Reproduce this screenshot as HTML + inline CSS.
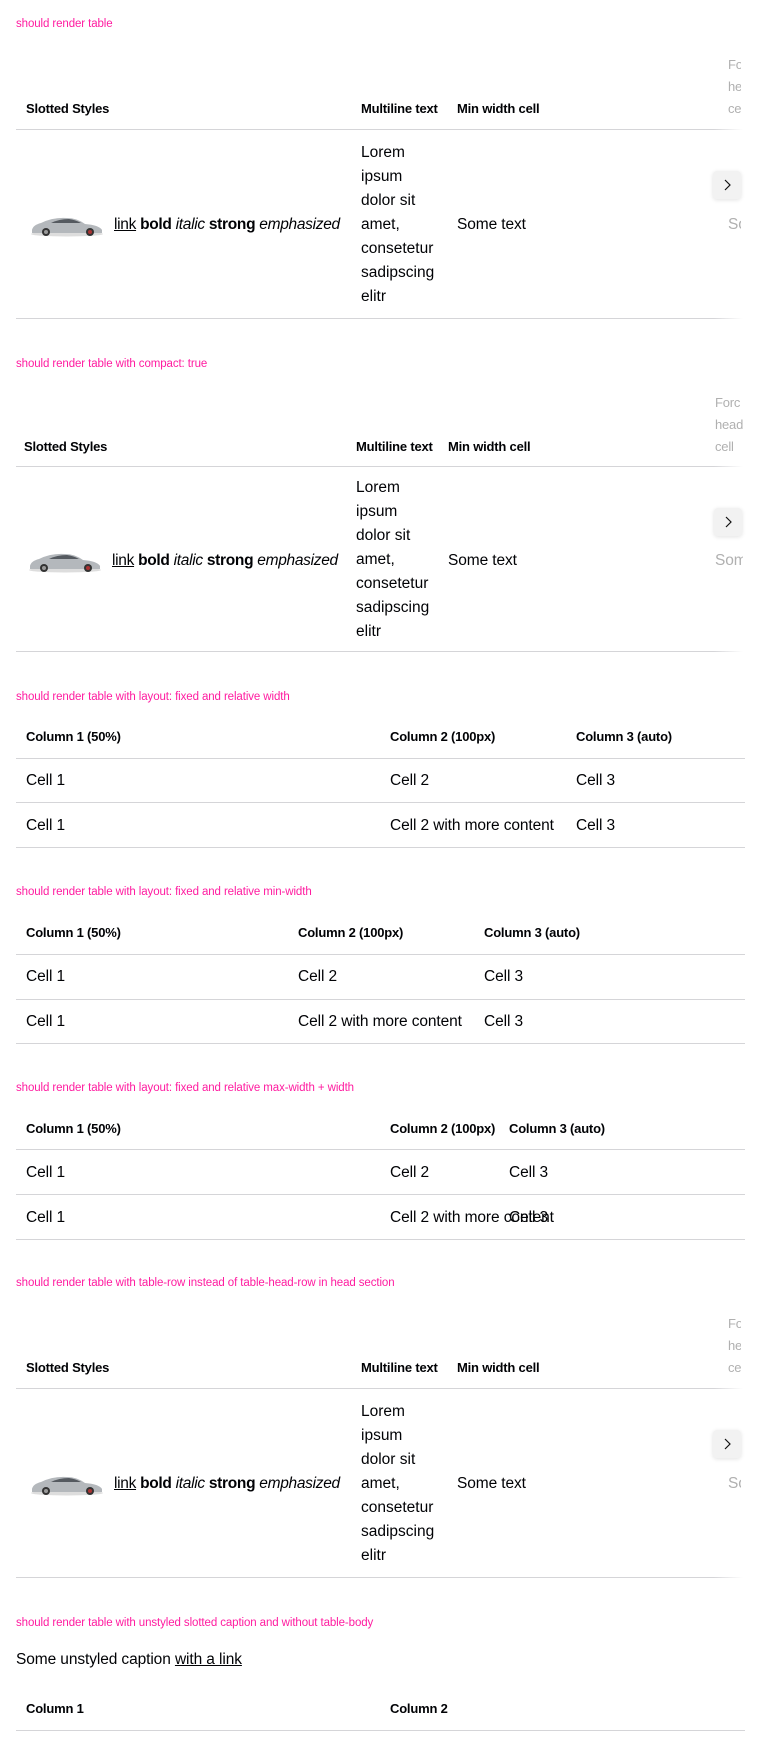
<!DOCTYPE html>
<html><head><meta charset="utf-8"><style>
html,body{margin:0;padding:0;background:#fff}
body{width:760px;height:1751px;position:relative;overflow:hidden;font-family:"Liberation Sans",sans-serif;color:#010205}
.l{position:absolute;left:16px;font-size:11.5px;color:#ff1ca0;line-height:14px;white-space:nowrap;letter-spacing:-0.1px}
.h{position:absolute;font-size:13px;font-weight:bold;line-height:20px;white-space:nowrap;letter-spacing:-0.2px}
.c{position:absolute;font-size:15.5px;line-height:24px;white-space:nowrap;letter-spacing:-0.1px}
.g{color:#b0b0b0;overflow:hidden;width:13px;font-weight:normal}
.hl{position:absolute;left:16px;width:729px;height:1px;background:#d5d5d8}
.fl{position:absolute;left:16px;width:727px;height:1px;background:linear-gradient(to right,#d5d5d8 0,#d5d5d8 96%,rgba(213,213,216,0) 100%)}
.btn{position:absolute;width:28px;height:28px;background:#f2f2f2;border-radius:4px;box-shadow:0 1px 4px rgba(0,0,0,.12)}
.btn svg{position:absolute;left:8px;top:7px}
.mt{position:absolute;font-size:15.5px;line-height:24px;white-space:nowrap}
u{text-decoration:underline}
</style></head><body>

<!-- Table 1 -->
<div class="l" style="top:17px">should render table</div>
<div class="h" style="left:26px;top:99px">Slotted Styles</div>
<div class="h" style="left:361px;top:99px">Multiline text</div>
<div class="h" style="left:457px;top:99px">Min width cell</div>
<div class="h g" style="left:728px;top:54px;font-size:13px;line-height:22px">Fo<br>he<br>ce</div>
<div class="fl" style="top:129px"></div>
<svg style="position:absolute;left:29px;top:213px" width="76" height="24" viewBox="0 0 76 24"><ellipse cx="38" cy="21" rx="36" ry="2.5" fill="#ddd"/><path d="M3 17 Q4 12 12 10 Q24 4 38 5 Q48 5 56 11 Q70 12 73 17 L73 20 L3 20 Z" fill="#b4b8bc"/><path d="M22 10 Q30 6 40 6 Q47 7 52 10 Z" fill="#555a60"/><circle cx="17" cy="19" r="4" fill="#333"/><circle cx="17" cy="19" r="2" fill="#999"/><circle cx="61" cy="19" r="4" fill="#333"/><circle cx="61" cy="19" r="2" fill="#a33"/></svg>
<div class="c" style="left:114px;top:213px;letter-spacing:-0.3px"><u>link</u> <b>bold</b> <i>italic</i> <strong>strong</strong> <em>emphasized</em></div>
<div class="mt" style="left:361px;top:141px">Lorem<br>ipsum<br>dolor sit<br>amet,<br>consetetur<br>sadipscing<br>elitr</div>
<div class="c" style="left:457px;top:213px">Some text</div>
<div class="c g" style="left:728px;top:213px">So</div>
<div class="btn" style="left:713px;top:171px"><svg width="12" height="14" viewBox="0 0 12 14"><path d="M4 2 L9 7 L4 12" fill="none" stroke="#111" stroke-width="1.2"/></svg></div>
<div class="fl" style="top:318px"></div>

<!-- Table 2 compact -->
<div class="l" style="top:357px">should render table with compact: true</div>
<div class="h" style="left:24px;top:437px">Slotted Styles</div>
<div class="h" style="left:356px;top:437px">Multiline text</div>
<div class="h" style="left:448px;top:437px">Min width cell</div>
<div class="h g" style="left:715px;top:392px;font-size:13px;line-height:22px;width:28px">Forc<br>head<br>cell</div>
<div class="fl" style="top:466px"></div>
<svg style="position:absolute;left:27px;top:549px" width="76" height="24" viewBox="0 0 76 24"><ellipse cx="38" cy="21" rx="36" ry="2.5" fill="#ddd"/><path d="M3 17 Q4 12 12 10 Q24 4 38 5 Q48 5 56 11 Q70 12 73 17 L73 20 L3 20 Z" fill="#b4b8bc"/><path d="M22 10 Q30 6 40 6 Q47 7 52 10 Z" fill="#555a60"/><circle cx="17" cy="19" r="4" fill="#333"/><circle cx="17" cy="19" r="2" fill="#999"/><circle cx="61" cy="19" r="4" fill="#333"/><circle cx="61" cy="19" r="2" fill="#a33"/></svg>
<div class="c" style="left:112px;top:549px;letter-spacing:-0.3px"><u>link</u> <b>bold</b> <i>italic</i> <strong>strong</strong> <em>emphasized</em></div>
<div class="mt" style="left:356px;top:476px">Lorem<br>ipsum<br>dolor sit<br>amet,<br>consetetur<br>sadipscing<br>elitr</div>
<div class="c" style="left:448px;top:549px">Some text</div>
<div class="c g" style="left:715px;top:549px;width:28px">Som</div>
<div class="btn" style="left:714px;top:508px"><svg width="12" height="14" viewBox="0 0 12 14"><path d="M4 2 L9 7 L4 12" fill="none" stroke="#111" stroke-width="1.2"/></svg></div>
<div class="fl" style="top:651px"></div>

<!-- Table 3 -->
<div class="l" style="top:690px">should render table with layout: fixed and relative width</div>
<div class="h" style="left:26px;top:727px">Column 1 (50%)</div>
<div class="h" style="left:390px;top:727px">Column 2 (100px)</div>
<div class="h" style="left:576px;top:727px">Column 3 (auto)</div>
<div class="hl" style="top:758px"></div>
<div class="c" style="left:26px;top:769px">Cell 1</div>
<div class="c" style="left:390px;top:769px">Cell 2</div>
<div class="c" style="left:576px;top:769px">Cell 3</div>
<div class="hl" style="top:802px"></div>
<div class="c" style="left:26px;top:814px">Cell 1</div>
<div class="c" style="left:390px;top:814px">Cell 2 with more content</div>
<div class="c" style="left:576px;top:814px">Cell 3</div>
<div class="hl" style="top:847px"></div>

<!-- Table 4 -->
<div class="l" style="top:885px">should render table with layout: fixed and relative min-width</div>
<div class="h" style="left:26px;top:923px">Column 1 (50%)</div>
<div class="h" style="left:298px;top:923px">Column 2 (100px)</div>
<div class="h" style="left:484px;top:923px">Column 3 (auto)</div>
<div class="hl" style="top:954px"></div>
<div class="c" style="left:26px;top:965px">Cell 1</div>
<div class="c" style="left:298px;top:965px">Cell 2</div>
<div class="c" style="left:484px;top:965px">Cell 3</div>
<div class="hl" style="top:999px"></div>
<div class="c" style="left:26px;top:1010px">Cell 1</div>
<div class="c" style="left:298px;top:1010px">Cell 2 with more content</div>
<div class="c" style="left:484px;top:1010px">Cell 3</div>
<div class="hl" style="top:1043px"></div>

<!-- Table 5 -->
<div class="l" style="top:1081px">should render table with layout: fixed and relative max-width + width</div>
<div class="h" style="left:26px;top:1119px">Column 1 (50%)</div>
<div class="h" style="left:390px;top:1119px">Column 2 (100px)</div>
<div class="h" style="left:509px;top:1119px">Column 3 (auto)</div>
<div class="hl" style="top:1149px"></div>
<div class="c" style="left:26px;top:1161px">Cell 1</div>
<div class="c" style="left:390px;top:1161px">Cell 2</div>
<div class="c" style="left:509px;top:1161px">Cell 3</div>
<div class="hl" style="top:1194px"></div>
<div class="c" style="left:26px;top:1206px">Cell 1</div>
<div class="c" style="left:390px;top:1206px">Cell 2 with more content</div>
<div class="c" style="left:509px;top:1206px">Cell 3</div>
<div class="hl" style="top:1239px"></div>

<!-- Table 6 -->
<div class="l" style="top:1276px">should render table with table-row instead of table-head-row in head section</div>
<div class="h" style="left:26px;top:1358px">Slotted Styles</div>
<div class="h" style="left:361px;top:1358px">Multiline text</div>
<div class="h" style="left:457px;top:1358px">Min width cell</div>
<div class="h g" style="left:728px;top:1313px;font-size:13px;line-height:22px">Fo<br>he<br>ce</div>
<div class="fl" style="top:1388px"></div>
<svg style="position:absolute;left:29px;top:1472px" width="76" height="24" viewBox="0 0 76 24"><ellipse cx="38" cy="21" rx="36" ry="2.5" fill="#ddd"/><path d="M3 17 Q4 12 12 10 Q24 4 38 5 Q48 5 56 11 Q70 12 73 17 L73 20 L3 20 Z" fill="#b4b8bc"/><path d="M22 10 Q30 6 40 6 Q47 7 52 10 Z" fill="#555a60"/><circle cx="17" cy="19" r="4" fill="#333"/><circle cx="17" cy="19" r="2" fill="#999"/><circle cx="61" cy="19" r="4" fill="#333"/><circle cx="61" cy="19" r="2" fill="#a33"/></svg>
<div class="c" style="left:114px;top:1472px;letter-spacing:-0.3px"><u>link</u> <b>bold</b> <i>italic</i> <strong>strong</strong> <em>emphasized</em></div>
<div class="mt" style="left:361px;top:1400px">Lorem<br>ipsum<br>dolor sit<br>amet,<br>consetetur<br>sadipscing<br>elitr</div>
<div class="c" style="left:457px;top:1472px">Some text</div>
<div class="c g" style="left:728px;top:1472px">So</div>
<div class="btn" style="left:713px;top:1430px"><svg width="12" height="14" viewBox="0 0 12 14"><path d="M4 2 L9 7 L4 12" fill="none" stroke="#111" stroke-width="1.2"/></svg></div>
<div class="fl" style="top:1577px"></div>

<!-- Table 7 -->
<div class="l" style="top:1616px">should render table with unstyled slotted caption and without table-body</div>
<div class="c" style="left:16px;top:1648px">Some unstyled caption <u>with a link</u></div>
<div class="h" style="left:26px;top:1699px">Column 1</div>
<div class="h" style="left:390px;top:1699px">Column 2</div>
<div class="hl" style="top:1730px"></div>

</body></html>
